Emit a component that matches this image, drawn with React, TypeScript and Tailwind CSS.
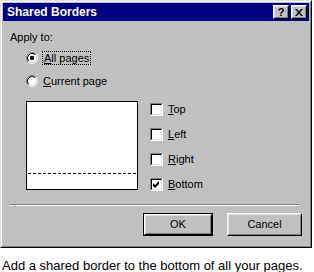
import React from "react";

function Radio({ checked }: { checked?: boolean }) {
  return (
    <svg width="12" height="12" viewBox="0 0 12 12" className="shrink-0">
      <circle cx="6" cy="6" r="4.2" fill="#fff" />
      <path d="M2.11 9.89 A5.5 5.5 0 0 1 9.89 2.11" stroke="#808080" fill="none" />
      <path d="M9.89 2.11 A5.5 5.5 0 0 1 2.11 9.89" stroke="#fff" fill="none" />
      <path d="M2.82 9.18 A4.5 4.5 0 0 1 9.18 2.82" stroke="#000" fill="none" />
      <path d="M9.18 2.82 A4.5 4.5 0 0 1 2.82 9.18" stroke="#dfdfdf" fill="none" />
      {checked && <rect x="4" y="4" width="4" height="4" rx="1.2" fill="#000" />}
    </svg>
  );
}

function Check({ checked, label, hot }: { checked?: boolean; label: string; hot: string }) {
  return (
    <div className="flex items-center h-[13px]">
      <div className="w-[13px] h-[13px] border border-t-[#808080] border-l-[#808080] border-r-white border-b-white">
        <div className="w-full h-full border border-t-black border-l-black border-r-[#dfdfdf] border-b-[#dfdfdf] bg-white flex items-center justify-center">
          {checked && (
            <svg width="7" height="7" viewBox="0 0 7 7">
              <polygon points="0,2 2,4 6,0 6,3 2,7 0,5" fill="#000" />
            </svg>
          )}
        </div>
      </div>
      <span className="ml-[5px]">
        <u>{hot}</u>
        {label}
      </span>
    </div>
  );
}

function Button({ children, isDefault, w }: { children: React.ReactNode; isDefault?: boolean; w: string }) {
  const inner = (
    <div className="w-full h-full border border-t-white border-l-white border-r-black border-b-black">
      <div className="w-full h-full border border-t-[#dfdfdf] border-l-[#dfdfdf] border-r-[#808080] border-b-[#808080] flex items-center justify-center">
        {children}
      </div>
    </div>
  );
  return (
    <div className={`${w} h-[23px] ${isDefault ? "border border-black" : ""}`}>{inner}</div>
  );
}

function CapButton({ children }: { children: React.ReactNode }) {
  return (
    <div className="w-[16px] h-[14px] border border-t-white border-l-white border-r-black border-b-black bg-[#c0c0c0]">
      <div className="w-full h-full border border-t-[#dfdfdf] border-l-[#dfdfdf] border-r-[#808080] border-b-[#808080] flex items-center justify-center text-black">
        {children}
      </div>
    </div>
  );
}

export default function App() {
  return (
    <div className="w-[314px] h-[272px] bg-white text-black font-['Liberation_Sans',Arial,sans-serif] text-[11px] leading-[13px]">
      {/* dialog */}
      <div className="w-[312px] h-[248px] border border-t-[#dfdfdf] border-l-[#dfdfdf] border-r-black border-b-black">
        <div className="w-full h-full border border-t-white border-l-white border-r-[#808080] border-b-[#808080] bg-[#c0c0c0] p-[1px] flex flex-col">
          {/* title bar */}
          <div className="h-[18px] bg-[#000080] flex items-center pl-[4px] pr-[2px]">
            <span className="text-white font-bold text-[12px] flex-1">Shared Borders</span>
            <div className="flex gap-[2px]">
              <CapButton>
                <span className="font-bold text-[11px] leading-none">?</span>
              </CapButton>
              <CapButton>
                <svg width="8" height="7" viewBox="0 0 8 7">
                  <path d="M0 0h2l2 2.5L6 0h2L5 3.5 8 7H6L4 4.5 2 7H0l3-3.5z" fill="#000" />
                </svg>
              </CapButton>
            </div>
          </div>

          {/* body */}
          <div className="pl-[7px] mt-[10px]">Apply to:</div>
          <div className="flex items-center pl-[23px] mt-[7px] h-[14px]">
            <Radio checked />
            <span className="ml-[4px] px-[1px] border border-dotted border-black leading-[12px]">
              <u>A</u>ll pages
            </span>
          </div>
          <div className="flex items-center pl-[23px] mt-[9px] h-[14px]">
            <Radio />
            <span className="ml-[5px]">
              <u>C</u>urrent page
            </span>
          </div>

          <div className="flex pl-[23px] mt-[13px]">
            <div className="w-[112px] h-[89px] border border-black bg-white">
              <svg width="110" height="87" className="block">
                <line x1="1" y1="71.5" x2="109" y2="71.5" stroke="#000" strokeDasharray="3 2" />
              </svg>
            </div>
            <div className="flex flex-col gap-[12px] ml-[12px] mt-[2px]">
              <Check hot="T" label="op" />
              <Check hot="L" label="eft" />
              <Check hot="R" label="ight" />
              <Check hot="B" label="ottom" checked />
            </div>
          </div>

          <div className="ml-[7px] mt-[13px] w-[289px] h-[2px] border-t border-t-[#808080] border-b border-b-white" />

          <div className="flex justify-end gap-[14px] pr-[7px] mt-[7px]">
            <Button isDefault w="w-[70px]">OK</Button>
            <Button w="w-[75px]">Cancel</Button>
          </div>
        </div>
      </div>

      <div className="pl-[2px] mt-[10px] text-[13px] leading-[15px]">
        Add a shared border to the bottom of all your pages.
      </div>
    </div>
  );
}
